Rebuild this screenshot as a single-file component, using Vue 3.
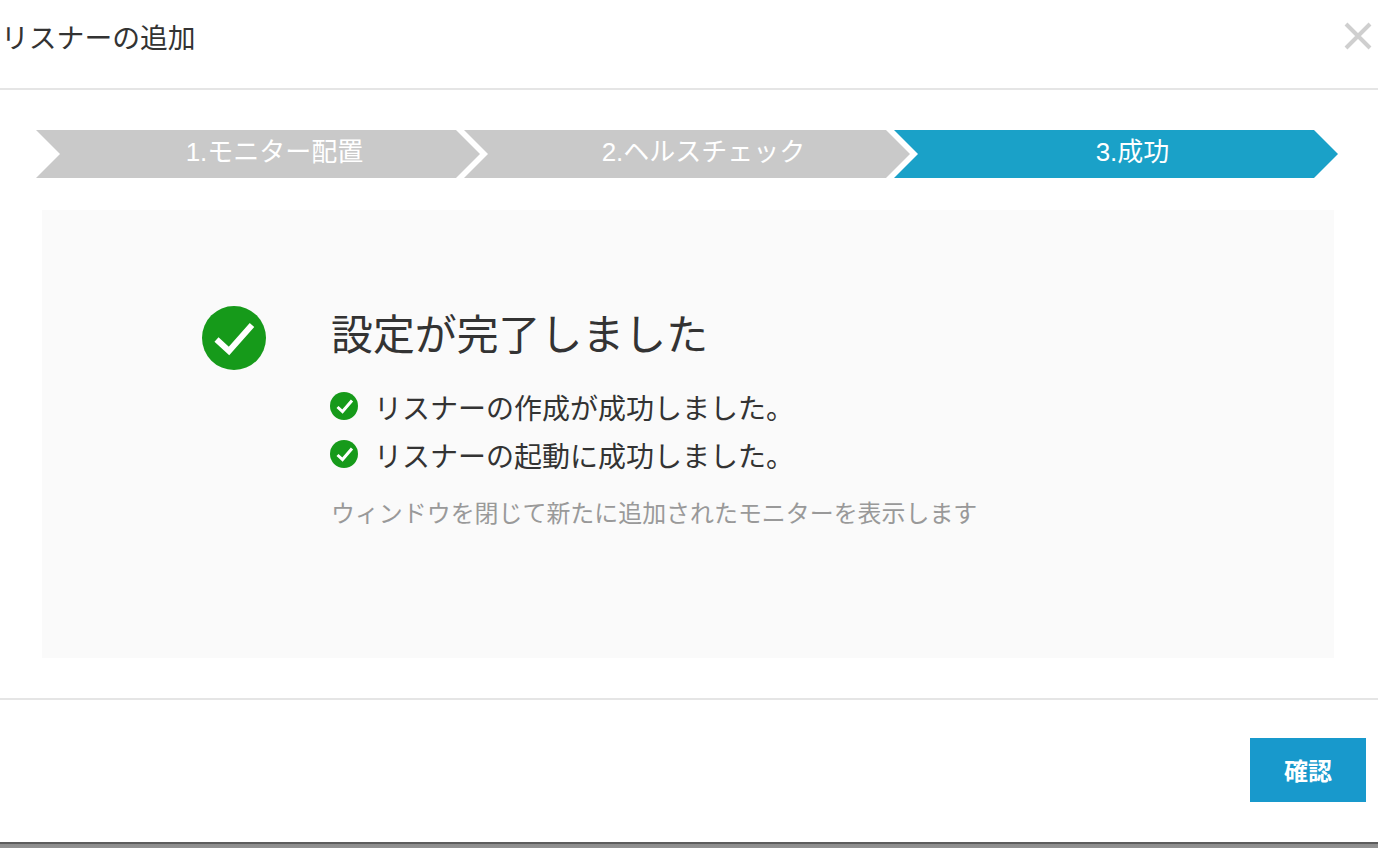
<script setup>
const steps = [
  { label: '1.モニター配置', active: false },
  { label: '2.ヘルスチェック', active: false },
  { label: '3.成功', active: true },
]
const results = ['リスナーの作成が成功しました。', 'リスナーの起動に成功しました。']
</script>

<template>
  <div class="dialog">
    <header class="head">
      <h1 class="title">リスナーの追加</h1>
      <svg class="close" width="28" height="28" viewBox="0 0 28 28" aria-label="閉じる">
        <path d="M2 2 L26 26 M26 2 L2 26" fill="none" stroke="#cfcfcf" stroke-width="4" />
      </svg>
    </header>

    <main class="body">
      <ol class="steps">
        <li v-for="s in steps" :key="s.label" class="step" :class="{ active: s.active }">{{ s.label }}</li>
      </ol>

      <section class="panel">
        <svg class="big-icon" width="64" height="64" viewBox="0 0 64 64">
          <circle cx="32" cy="32" r="32" fill="#169a1a" />
          <path d="M14.5 33.5 L27 45 L50 19" fill="none" stroke="#fff" stroke-width="6" />
        </svg>
        <div class="message">
          <h2 class="heading">設定が完了しました</h2>
          <ul class="results">
            <li v-for="r in results" :key="r" class="result">
              <svg width="28" height="28" viewBox="0 0 28 28">
                <circle cx="14" cy="14" r="14" fill="#169a1a" />
                <path d="M7.5 15 L12.5 19.5 L22 8.5" fill="none" stroke="#fff" stroke-width="3" />
              </svg>
              <span>{{ r }}</span>
            </li>
          </ul>
          <p class="hint">ウィンドウを閉じて新たに追加されたモニターを表示します</p>
        </div>
      </section>
    </main>

    <footer class="foot">
      <button class="confirm" type="button">確認</button>
    </footer>
    <div class="strip"></div>
  </div>
</template>

<style>
html, body { margin: 0; background: #fff; }
</style>

<style scoped>
.dialog {
  width: 1378px;
  height: 848px;
  display: flex;
  flex-direction: column;
  overflow: hidden;
  background: #fff;
  color: #333;
  font-family: "Liberation Sans", "Noto Sans CJK JP", sans-serif;
}
.head {
  box-sizing: border-box;
  height: 90px;
  flex: none;
  display: flex;
  align-items: center;
  justify-content: space-between;
  padding: 0 6px 14px 1px;
  border-bottom: 2px solid #e5e5e5;
}
.title { margin: 4px 0 0; font-size: 27.8px; font-weight: 400; line-height: 40px; }
.close { display: block; margin-bottom: 2px; }
.body {
  flex: none;
  height: 608px;
  box-sizing: border-box;
  padding: 40px 40px 0 36px;
}
.steps {
  list-style: none;
  margin: 0;
  padding: 0;
  display: flex;
  width: 1302px;
}
.step {
  box-sizing: border-box;
  flex: 0 0 444px;
  height: 48px;
  margin-right: -16px;
  padding: 0 0 10px 33px;
  display: flex;
  align-items: center;
  justify-content: center;
  background: #c9c9c9;
  color: #fff;
  font-size: 26px;
  clip-path: polygon(0 0, calc(100% - 24px) 0, 100% 50%, calc(100% - 24px) 100%, 0 100%, 24px 50%);
}
.step:nth-child(2) { flex-basis: 446px; }
.step.active { background: #1aa1c8; margin-right: 0; }
.panel {
  box-sizing: border-box;
  width: 1292px;
  height: 448px;
  margin: 32px 0 0 6px;
  padding: 96px 0 0 160px;
  background: #fafafa;
  display: flex;
  align-items: flex-start;
}
.big-icon { display: block; flex: none; }
.message { margin-left: 64px; }
.heading { margin: 0 0 0 1px; font-size: 41.9px; font-weight: 400; line-height: 60px; }
.results { list-style: none; margin: 16px 0 0; padding: 0; }
.result {
  display: flex;
  align-items: center;
  gap: 16px;
  height: 48px;
  font-size: 28px;
}
.result span { position: relative; top: 1px; }
.result svg { display: block; flex: none; }
.hint { margin: 18px 0 0 1px; font-size: 23.95px; line-height: 36px; color: #999; }
.foot {
  flex: 1;
  box-sizing: border-box;
  border-top: 2px solid #e5e5e5;
  padding: 38px 12px 0 0;
  display: flex;
  justify-content: flex-end;
  align-items: flex-start;
}
.confirm {
  width: 116px;
  height: 64px;
  border: 0;
  padding: 0 0 2px;
  background: #1899cc;
  color: #fff;
  font: 700 24px "Liberation Sans", "Noto Sans CJK JP", sans-serif;
}
.strip {
  flex: none;
  height: 6px;
  background: linear-gradient(#5c5c5c 0, #5c5c5c 2px, #8c8c8c 2px, #929292 100%);
}
</style>
